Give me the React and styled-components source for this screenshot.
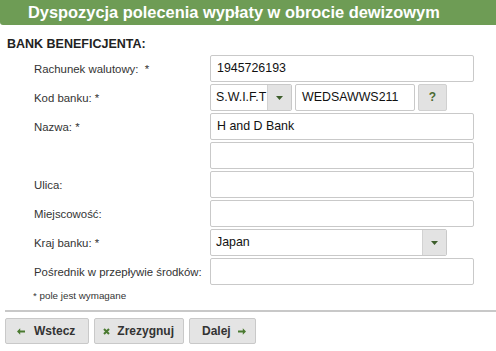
import React from "react";
import styled, { createGlobalStyle } from "styled-components";

const GlobalStyle = createGlobalStyle`
  body {
    margin: 0;
    background: #ffffff;
    font-family: "Liberation Sans", Arial, sans-serif;
  }
`;

const Page = styled.div`
  width: 496px;
  height: 351px;
  overflow: hidden;
  background: #fff;
`;

const Header = styled.div`
  height: 25px;
  background: #6e9c55;
  border-bottom-left-radius: 3px;
  color: #fff;
  font-weight: bold;
  font-size: 16.4px;
  line-height: 25px;
  padding-left: 28px;
  white-space: nowrap;
`;

const SectionTitle = styled.div`
  margin: 12px 0 0 7px;
  font-size: 12.5px;
  font-weight: bold;
  color: #222;
  line-height: 15px;
`;

const Form = styled.div`
  display: flex;
  flex-direction: column;
  gap: 2px;
  margin-top: 3px;
  padding-left: 34px;
`;

const Row = styled.div`
  display: flex;
  align-items: center;
  height: 27px;
`;

const Label = styled.div`
  width: 176px;
  font-size: 11.4px;
  color: #333;
  white-space: nowrap;
`;

const Controls = styled.div`
  display: flex;
  gap: 3px;
  height: 27px;
`;

const Input = styled.div`
  box-sizing: border-box;
  width: ${(p) => p.$w || 264}px;
  height: 27px;
  border: 1px solid #c9c9c9;
  border-radius: 2px;
  background: #fff;
  padding-left: 6px;
  font-size: 12.4px;
  line-height: 25px;
  color: #111;
`;

const Select = styled.div`
  box-sizing: border-box;
  width: ${(p) => p.$w}px;
  height: 27px;
  display: flex;
  border: 1px solid #c9c9c9;
  border-radius: 2px;
  background: #fff;
  overflow: hidden;
`;

const SelectValue = styled.div`
  flex: 1;
  padding-left: 5px;
  font-size: 12.4px;
  line-height: 25px;
  color: #111;
`;

const SelectButton = styled.div`
  width: 23px;
  background: #e3e3e3;
  border-left: 1px solid #d2d2d2;
  display: flex;
  align-items: center;
  justify-content: center;
`;

const HelpButton = styled.div`
  box-sizing: border-box;
  width: 29px;
  height: 27px;
  background: #e2e2e2;
  border: 1px solid #d0d0d0;
  border-radius: 2px;
  color: #4b6b33;
  font-weight: bold;
  font-size: 12px;
  line-height: 25px;
  text-align: center;
`;

const Note = styled.div`
  margin: 5px 0 0 33px;
  font-size: 9.8px;
  color: #333;
  line-height: 12px;
`;

const Separator = styled.div`
  margin: 8px 0 0 5px;
  height: 2px;
  background: #c8c8c8;
`;

const ButtonBar = styled.div`
  display: flex;
  gap: 5px;
  padding: 6px 0 0 5px;
`;

const Button = styled.div`
  box-sizing: border-box;
  height: 26px;
  display: flex;
  align-items: center;
  gap: ${(p) => p.$gap}px;
  padding: 0 ${(p) => p.$right}px 0 ${(p) => p.$left}px;
  background: #e4e4e4;
  border: 1px solid #c9c9c9;
  border-radius: 2px;
  font-weight: bold;
  font-size: 12px;
  color: #333;
`;

const Arrow = () => (
  <svg width="7" height="4" viewBox="0 0 7 4">
    <path d="M0 0 H7 L3.5 4 Z" fill="#3d5e2b" />
  </svg>
);

const LeftIcon = () => (
  <svg width="8" height="7" viewBox="0 0 8 7">
    <path d="M0 3.5 L3.2 0.3 V2.6 H8 V4.4 H3.2 V6.7 Z" fill="#4a7a30" />
  </svg>
);

const RightIcon = () => (
  <svg width="8" height="7" viewBox="0 0 8 7">
    <path d="M8 3.5 L4.8 0.3 V2.6 H0 V4.4 H4.8 V6.7 Z" fill="#4a7a30" />
  </svg>
);

const CrossIcon = () => (
  <svg width="7" height="7" viewBox="0 0 7 7">
    <path d="M1 1 L6 6 M6 1 L1 6" stroke="#4a7a30" strokeWidth="2" />
  </svg>
);

function App() {
  return (
    <Page>
      <GlobalStyle />
      <Header>Dyspozycja polecenia wypłaty w obrocie dewizowym</Header>
      <SectionTitle>BANK BENEFICJENTA:</SectionTitle>
      <Form>
        <Row>
          <Label>Rachunek walutowy:&nbsp; *</Label>
          <Input>1945726193</Input>
        </Row>
        <Row>
          <Label>Kod banku: *</Label>
          <Controls>
            <Select $w={82}>
              <SelectValue>S.W.I.F.T</SelectValue>
              <SelectButton>
                <Arrow />
              </SelectButton>
            </Select>
            <Input $w={120}>WEDSAWWS211</Input>
            <HelpButton>?</HelpButton>
          </Controls>
        </Row>
        <Row>
          <Label>Nazwa: *</Label>
          <Input>H and D Bank</Input>
        </Row>
        <Row>
          <Label />
          <Input />
        </Row>
        <Row>
          <Label>Ulica:</Label>
          <Input />
        </Row>
        <Row>
          <Label>Miejscowość:</Label>
          <Input />
        </Row>
        <Row>
          <Label>Kraj banku: *</Label>
          <Select $w={237}>
            <SelectValue>Japan</SelectValue>
            <SelectButton>
              <Arrow />
            </SelectButton>
          </Select>
        </Row>
        <Row>
          <Label>Pośrednik w przepływie środków:</Label>
          <Input />
        </Row>
      </Form>
      <Note>* pole jest wymagane</Note>
      <Separator />
      <ButtonBar>
        <Button $left={11} $right={13} $gap={9}>
          <LeftIcon />
          Wstecz
        </Button>
        <Button $left={8} $right={9} $gap={7}>
          <CrossIcon />
          Zrezygnuj
        </Button>
        <Button $left={12} $right={9} $gap={7}>
          Dalej
          <RightIcon />
        </Button>
      </ButtonBar>
    </Page>
  );
}

export default App;
